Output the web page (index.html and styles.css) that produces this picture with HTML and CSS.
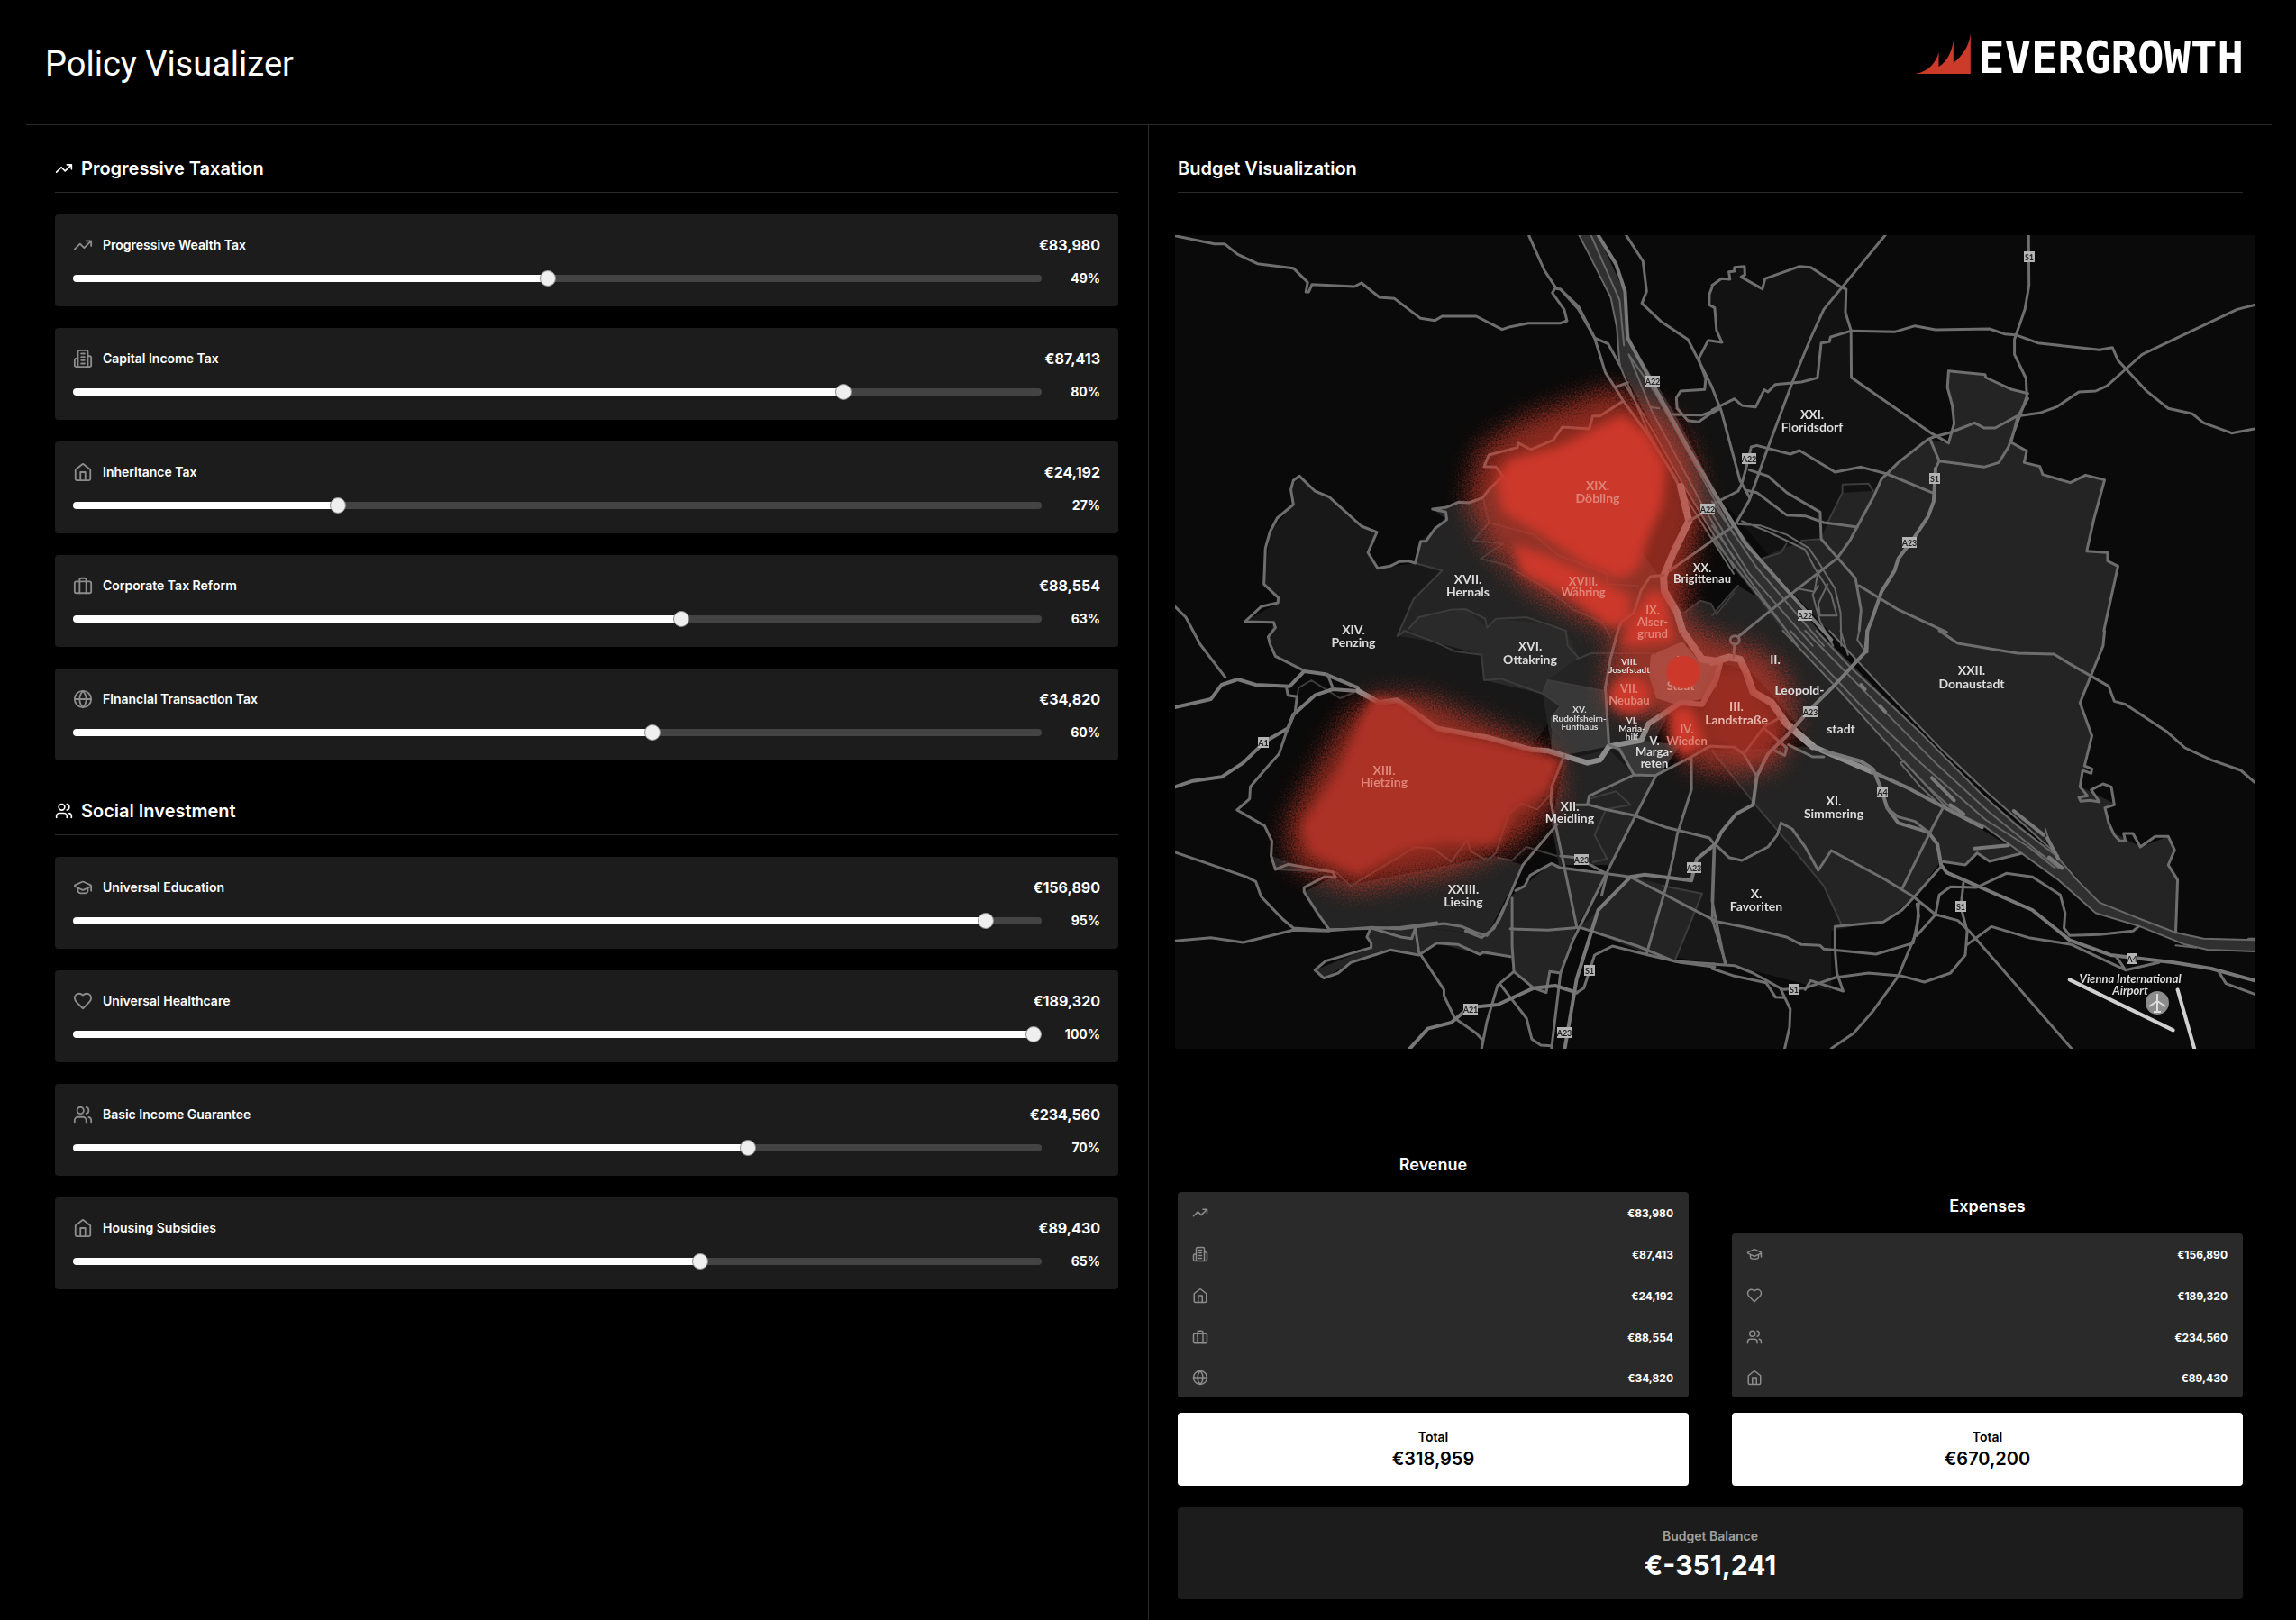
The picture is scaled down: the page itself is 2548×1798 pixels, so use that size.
FILE: index.html
```html
<!DOCTYPE html>
<html lang="en">
<head>
<meta charset="utf-8">
<meta name="viewport" content="width=device-width, initial-scale=1">
<title>Policy Visualizer</title>
<link rel="stylesheet" href="styles.css">
</head>
<body>
<svg class="sprite" aria-hidden="true">
  <symbol id="trend" viewBox="0 0 24 24"><path d="M22 7 13.5 15.5 8.5 10.5 2 17M16 7h6v6"/></symbol>
  <symbol id="building" viewBox="0 0 24 24"><path d="M6 22V4a2 2 0 0 1 2-2h8a2 2 0 0 1 2 2v18ZM6 12H4a2 2 0 0 0-2 2v6a2 2 0 0 0 2 2h2M18 9h2a2 2 0 0 1 2 2v9a2 2 0 0 1-2 2h-2M10 6h4M10 10h4M10 14h4M10 18h4"/></symbol>
  <symbol id="house" viewBox="0 0 24 24"><path d="m3 9 9-7 9 7v11a2 2 0 0 1-2 2H5a2 2 0 0 1-2-2zM9 22V12h6v10"/></symbol>
  <symbol id="case" viewBox="0 0 24 24"><rect x="2" y="7" width="20" height="14" rx="2"/><path d="M16 21V5a2 2 0 0 0-2-2h-4a2 2 0 0 0-2 2v16"/></symbol>
  <symbol id="globe" viewBox="0 0 24 24"><circle cx="12" cy="12" r="10"/><path d="M12 2a14.5 14.5 0 0 0 0 20 14.5 14.5 0 0 0 0-20M2 12h20"/></symbol>
  <symbol id="users" viewBox="0 0 24 24"><path d="M16 21v-2a4 4 0 0 0-4-4H6a4 4 0 0 0-4 4v2M22 21v-2a4 4 0 0 0-3-3.87M16 3.13a4 4 0 0 1 0 7.75"/><circle cx="9" cy="7" r="4"/></symbol>
  <symbol id="cap" viewBox="0 0 24 24"><path d="M21.42 10.922a1 1 0 0 0-.019-1.838L12.83 5.18a2 2 0 0 0-1.66 0L2.6 9.08a1 1 0 0 0 0 1.832l8.57 3.908a2 2 0 0 0 1.66 0zM22 10v6M6 12.5V16a6 3 0 0 0 12 0v-3.5"/></symbol>
  <symbol id="heart" viewBox="0 0 24 24"><path d="M19 14c1.49-1.46 3-3.21 3-5.5A5.5 5.5 0 0 0 16.5 3c-1.76 0-3 .5-4.5 2-1.5-1.5-2.74-2-4.5-2A5.5 5.5 0 0 0 2 8.5c0 2.3 1.5 4.05 3 5.5l7 7Z"/></symbol>
</svg>

<div class="page">
  <header class="header">
    <h1 class="title">Policy Visualizer</h1>
    <div class="logo">
      <svg class="logo-mark" viewBox="140 116 182 135" aria-hidden="true"><path d="M140 250C180 244 208 214 216 178V227C244 210 261 176 265 136V214C296 192 318 156 322 116V251H140Z"/></svg>
      <span class="logo-text">EVERGROWTH</span>
    </div>
  </header>

  <main class="columns">
    <div class="controls">
      <section class="group">
        <h2 class="heading"><svg class="icon icon-head"><use href="#trend"/></svg>Progressive Taxation</h2>
        <div class="cards">
          <div class="card"><div class="card-top"><svg class="icon"><use href="#trend"/></svg><label class="name" for="s1">Progressive Wealth Tax</label><span class="amount">€83,980</span></div><div class="card-bottom"><input class="slider" id="s1" type="range" value="49" style="--v:49"><output class="percent" for="s1">49%</output></div></div>
          <div class="card"><div class="card-top"><svg class="icon"><use href="#building"/></svg><label class="name" for="s2">Capital Income Tax</label><span class="amount">€87,413</span></div><div class="card-bottom"><input class="slider" id="s2" type="range" value="80" style="--v:80"><output class="percent" for="s2">80%</output></div></div>
          <div class="card"><div class="card-top"><svg class="icon"><use href="#house"/></svg><label class="name" for="s3">Inheritance Tax</label><span class="amount">€24,192</span></div><div class="card-bottom"><input class="slider" id="s3" type="range" value="27" style="--v:27"><output class="percent" for="s3">27%</output></div></div>
          <div class="card"><div class="card-top"><svg class="icon"><use href="#case"/></svg><label class="name" for="s4">Corporate Tax Reform</label><span class="amount">€88,554</span></div><div class="card-bottom"><input class="slider" id="s4" type="range" value="63" style="--v:63"><output class="percent" for="s4">63%</output></div></div>
          <div class="card"><div class="card-top"><svg class="icon"><use href="#globe"/></svg><label class="name" for="s5">Financial Transaction Tax</label><span class="amount">€34,820</span></div><div class="card-bottom"><input class="slider" id="s5" type="range" value="60" style="--v:60"><output class="percent" for="s5">60%</output></div></div>
        </div>
      </section>
      <section class="group">
        <h2 class="heading"><svg class="icon icon-head"><use href="#users"/></svg>Social Investment</h2>
        <div class="cards">
          <div class="card"><div class="card-top"><svg class="icon"><use href="#cap"/></svg><label class="name" for="s6">Universal Education</label><span class="amount">€156,890</span></div><div class="card-bottom"><input class="slider" id="s6" type="range" value="95" style="--v:95"><output class="percent" for="s6">95%</output></div></div>
          <div class="card"><div class="card-top"><svg class="icon"><use href="#heart"/></svg><label class="name" for="s7">Universal Healthcare</label><span class="amount">€189,320</span></div><div class="card-bottom"><input class="slider" id="s7" type="range" value="100" style="--v:100"><output class="percent" for="s7">100%</output></div></div>
          <div class="card"><div class="card-top"><svg class="icon"><use href="#users"/></svg><label class="name" for="s8">Basic Income Guarantee</label><span class="amount">€234,560</span></div><div class="card-bottom"><input class="slider" id="s8" type="range" value="70" style="--v:70"><output class="percent" for="s8">70%</output></div></div>
          <div class="card"><div class="card-top"><svg class="icon"><use href="#house"/></svg><label class="name" for="s9">Housing Subsidies</label><span class="amount">€89,430</span></div><div class="card-bottom"><input class="slider" id="s9" type="range" value="65" style="--v:65"><output class="percent" for="s9">65%</output></div></div>
        </div>
      </section>
    </div>

    <section class="budget">
      <h2 class="heading">Budget Visualization</h2>
      <svg class="map" viewBox="1304 261 1198 903" role="img" aria-label="Map of Vienna districts">
        <defs>
          <filter id="halo" x="-30%" y="-30%" width="160%" height="160%">
            <feGaussianBlur stdDeviation="13" result="b"/>
            <feTurbulence type="fractalNoise" baseFrequency="0.6" numOctaves="1" seed="4" result="n"/>
            <feDisplacementMap in="b" in2="n" scale="40" xChannelSelector="R" yChannelSelector="G"/>
          </filter>
          <filter id="core" x="-20%" y="-20%" width="140%" height="140%"><feGaussianBlur stdDeviation="6"/></filter>
        </defs>
        <rect class="land" x="1304" y="261" width="1198" height="903"/>

        <!-- north-east quarter: fills -->
        <g transform="translate(1900 250) scale(.41327 .33333)">
          <path class="f1" d="M-8 215 25 178 48 180 60 140 87 137 88 170 135 212 142 178 235 137 265 140 360 213 374 507 592 695 470 828 400 980 335 1110 230 1210 0 880-70 650-96 600-85 552-20 547-37 445-11 383 26 390 12 350Z"/>
          <path class="f3" d="M635 485 733 497 735 507 805 547 848 560 848 577 803 723 845 752 838 790 880 803 888 830 962 857 1003 832 1054 848 1025 980 1006 1085 1062 1090 1062 1118 1090 1135 1052 1340 1050 1400 988 1590 1020 1700 990 1870 1080 1925 1055 1940 1075 2020 1150 2070 1225 2035 1242 2080 1225 2130 1250 2180 1245 2352 1150 2310 1040 2255 900 2060 700 1850 350 1400 130 1110 200 1070 293 1045 312 985 350 890 433 885 470 828 580 712 635 725 650 660 632 540Z"/>
          <path class="f3" d="M-80 1290-33 1250-3 1260 12 1295 70 1200 150 1260 500 1750 280 1740 180 1590 100 1480-60 1440Z"/>
        </g>
        <!-- north-west quarter: fills -->
        <g transform="translate(1300 250) scale(.39796 .33333)">
          <path class="f2" d="M680 1125 575 1142 548 1090 573 1022 530 1002 440 905 400 885 357 835 333 880 340 930 275 1020 258 1195 298 1240 297 1257 205 1320 285 1322 270 1370 290 1435 365 1480 520 1540 740 1675 1000 1745 1060 1640 1035 1560 872 1515 865 1430 735 1388 630 1368 675 1245 755 1150Z"/>
          <path class="f3" d="M680 1125 695 1052 768 980 728 945 868 907 925 835 1260 1000 1430 1290 1440 1500 1300 1830 1160 1790 1060 1740 1035 1560 872 1515 865 1430 735 1388 630 1368 675 1245 755 1150Z"/>
          <path class="f4" d="M660 1345 690 1305 820 1278 880 1340 905 1310 1040 1325 1100 1350 1135 1440 1050 1515 1035 1560 872 1515 865 1430 735 1388Z"/>
          <path class="f5" d="M1050 1515 1205 1550 1220 1735 1160 1790 1060 1745 1060 1640 1085 1600 1035 1560Z"/>
          <path class="water" d="M1137 33H1190L1262 220 1280 385 1400 620 1510 870 1568 990V1150L1400 800 1250 465 1240 340 1225 240Z"/>
        </g>
        <!-- south-west quarter: fills -->
        <g transform="translate(1300 700) scale(.39796 .33333)">
          <path class="f3" d="M280 750 500 845 900 750 980 780 880 1015 690 985 440 995 370 870 458 815 290 795Z"/>
          <path class="f3" d="M690 985 880 1015 940 890 1060 775 1215 810 1130 985 1085 1140 1055 1135 1045 1205 1010 1190 955 1135 945 1085 860 1078 740 1040 690 1080 610 1063 500 1105 425 1157 400 1130 557 1055 545 1020 555 992Z"/>
          <path class="f2" d="M1095 415 1220 385 1350 485 1500 385 1700 500 1900 985 1840 1000V1200L1568 1115 1325 1075 1140 988 1250 720 1070 640Z"/>
          <path class="f3" d="M1095 430 1220 395 1290 480 1345 490 1225 780 1080 780 1060 640Z"/>
          <path class="f5" d="M1240 390 1310 365 1420 380 1370 465 1350 482 1290 480Z"/>
          <path class="f3" d="M1280 820 1480 875 1405 1095 1325 1075 1140 988 1190 930Z"/>
        </g>
        <!-- south-east quarter: fills -->
        <g transform="translate(1900 700) scale(.41327 .33333)">
          <path class="f3" d="M0 400 270 385 190 0 630 590 830 742 745 768 712 740 680 780 615 768 540 890 460 970 350 985 300 850Z"/>
          <path class="water" d="M0-480 70-340 180-160 300 20 560 340 720 540 925 750 1040 905 1245 1005 1320 1025 1457 1030V1068L1330 1062 1270 1045 1150 985 1030 940 930 830 830 740 730 650 630 590 350 210 190 0 90-160 0-300Z"/>
        </g>
        <path class="f6" d="M1832 727 1867 712 1885 733 1912 735 1905 762 1893 775 1860 782 1838 775 1830 750Z"/>

        <!-- north-west quarter: lines -->
        <g class="lines" transform="translate(1300 250) scale(.39796 .33333)">
          <path class="dark" d="M870 910 885 990 842 1050 925 1060 862 1110 930 1130 1060 1220 1120 1280 1200 1320 1225 1370M885 990 1010 1030 1080 1100 1215 1160 1215 1195 1300 1200M680 1125 755 1150 675 1245 630 1368M660 1345 690 1305 780 1280 820 1278 875 1310 880 1340 905 1310 990 1305 1040 1325 1100 1350M1430 1290 1475 1250 1505 1260 1520 1295 1568 1225"/>
          <path d="M10 35 120 62 148 62 185 97 240 128 340 143 380 190 375 222 383 222 392 197 510 204 530 192 580 240 622 244 695 310 735 317 755 303 850 303 922 347 945 338 995 326 1085 326 1103 318 1095 280 1062 225 1070 210 1085 213 1135 270 1180 375 1218 395 1250 465"/>
          <path d="M997 35 1040 150 1072 208M1085 213 1135 280 1180 375 1210 490 1237 540 1272 524M1237 540 1260 585 1330 700 1405 840 1440 950 1443 985"/>
          <path class="thin" d="M1137 33 1170 110 1225 240 1242 340 1250 465 1262 500 1330 690 1420 880 1568 1160M1275 430 1340 620 1480 930 1568 1110M1275 430 1350 560 1568 1030M1265 530 1350 700 1430 870 1568 1140M1170 33 1250 250 1262 400M1335 605 1360 610"/>
          <path class="road" d="M1190 33 1240 130 1265 220 1272 375 1320 480 1440 740 1568 1000"/>
          <path d="M1268 33 1315 120 1325 220 1312 260 1365 320 1440 380 1470 450 1508 540M1508 205 1500 230 1500 265 1515 275 1520 350 1535 390 1497 383 1470 445 1490 510 1487 547 1420 552 1408 575 1410 610 1440 650 1470 655 1500 630 1530 610M1400 630 1480 632 1530 610"/>
          <path d="M680 1125 660 1118 635 1120 610 1135 575 1142 548 1090 573 1022 530 1002 440 905 400 885 357 835 340 850 333 880 340 930 295 975 275 1020 262 1075 258 1195 298 1240 297 1257 250 1270 205 1320 285 1322 290 1340 270 1370 275 1395 290 1435 365 1480M680 1125 695 1052 710 1052 735 1010 768 980 765 955 728 945 765 940 800 922 830 924 868 907 885 880 925 835 905 805 872 803 885 765 965 740 967 725 1003 747 1065 715 1090 672 1165 678 1175 635 1195 635 1260 585M10 1270 40 1305 80 1395 150 1505"/>
          <path class="canal" d="M1420 870 1443 985 1400 1090 1372 1170 1375 1220 1410 1290 1425 1350 1480 1445 1510 1450"/>
          <path d="M1372 1165 1335 1170 1310 1215 1290 1290 1255 1320 1245 1350M1390 1150 1508 1050M1443 985 1508 940"/>
        </g>
        <!-- north-east quarter: lines -->
        <g class="lines" transform="translate(1900 250) scale(.41327 .33333)">
          <path class="dark" d="M312 985 350 890 350 863 420 860 433 885M135 1110 185 1090 200 1060M0 1300 40 1240 70 1200M240 1050 293 1045"/>
          <path d="M0 200 25 178 48 180 45 155 60 153 60 140 87 137 88 165 78 172 135 212 142 178 235 137 265 140 345 205 360 213 358 290 373 350 374 507 592 695 635 725 650 660 645 600 632 540 635 485 733 497 735 507 805 547 848 560M848 577 820 640 803 723 845 752 838 790 880 803 888 830 962 857 1003 832 1054 848 1025 980 1006 1085 1062 1090 1062 1118 1090 1135 1052 1350"/>
          <path d="M465 33 350 205 300 280 265 375 215 525 150 740 100 915 70 980 60 1000M1457 265 1410 280 1155 430 1110 480 1060 535 1030 552 985 555 925 605 880 625 820 635 760 675 730 675 705 658 640 690 595 705 580 712 500 790 455 845 435 900 400 980 370 1050 335 1110 230 1210 70 1370"/>
          <path d="M850 33 851 200 840 280 812 380 812 430 843 510 845 570 825 640 795 740 770 790 730 805 610 785 600 810"/>
          <path class="road" d="M600 810 595 920 580 970 540 1045 500 1110 490 1150 455 1220 430 1310 417 1350 415 1420"/>
          <path d="M1457 678 1395 692 1320 658 1290 628 1225 610 1165 550 1090 450 1075 407 1040 415 875 392 815 365 785 362 745 345 600 348 545 335 490 355 372 352 318 372 315 388 293 392 283 508 240 522 170 530 150 555 140 548 117 605 80 600 60 578 0 615"/>
          <path d="M0 540 25 620 75 850 100 905M80 860 90 815 105 738 120 733 210 762 235 750 330 822 400 805 470 828 590 890M100 815 150 835 200 890 290 955 293 1045 385 1175 400 1280 395 1350M90 882 120 890 200 965 250 968 300 990 390 1005M585 712 610 785M0 930 70 885 80 860M0 1050 60 1000M395 1200 500 1280 630 1355"/>
          <path class="thin" d="M70 995 130 1000 200 1030 260 1075 290 1130 330 1210 345 1290 347 1400M80 985 150 1020 250 1080 275 1140 320 1230 335 1300 290 1300 285 1260 310 1195M230 1210 275 1220 285 1150M285 1200 270 1230 290 1320 325 1400M0 920 120 1140 300 1400M0 960 100 1160 270 1400M0 1000 100 1180 230 1400M0 1040 90 1180 200 1350"/>
          <path class="road" d="M0 880 90 1060 320 1380"/>
        </g>
        <!-- south-west quarter: lines -->
        <g class="lines" transform="translate(1300 700) scale(.39796 .33333)">
          <path class="dark" d="M635 15 650 0 735 38 790 68 865 80 872 165 920 160 1035 210 1085 250 1060 290 1060 320 1095 360M1035 210 1050 165 1205 200M1130 95 1170 75 1350 75M1100 0 1105 50 1135 90M350 220 355 190 390 165 470 225 510 205M290 795 458 803 500 850 680 720 730 725 780 770 825 695 835 735 880 765 905 740 940 610 975 575 1020 595 1060 540M910 755 950 765 990 720 1075 750M1165 560 1240 535 1280 580 1210 595M1210 600 1180 680 1215 760 1175 770M1370 850 1480 875 1405 1095"/>
          <path class="road" d="M10 255 110 228 140 180 185 162 235 180 330 185 370 135 430 145 520 190"/>
          <path class="wien" d="M520 200 580 240 630 232 740 325 880 355 1000 395 1050 400 1160 440 1195 430 1220 385 1310 365 1330 310 1420 240 1480 245 1520 160 1530 110"/>
          <path class="road" d="M10 520 60 500 140 487 200 440 260 370 325 325 340 280 400 215 450 195 510 200"/>
          <path d="M435 145 450 190M320 185 325 215 350 220 345 270 320 340 300 410 270 450 220 520 218 560 183 597 260 650 280 700 278 750 290 795 325 778 450 803 458 822 425 820 370 855 370 870 410 945 440 995"/>
          <path d="M1245 0 1225 90 1210 190 1220 380 1250 395 1290 480 1350 482 1450 420 1500 385 1510 385M1290 480 1165 550 1160 580 1130 580M1165 580 1210 595 1290 615 1380 655 1500 690 1515 712"/>
          <path d="M1095 415 1060 520 1058 570 1070 640 1130 985M1350 485 1250 720 1120 1030 1085 1140 1060 1391M1450 420 1450 530 1410 680 1400 750 1380 850 1325 1075"/>
          <path d="M1075 645 980 780 940 890 915 960 880 1015 850 1005 810 985 760 975 690 985 640 993 560 988 440 998 340 990 310 960 250 885 235 835 210 820 10 738M930 915 900 990 865 1022 820 1000M10 1033 110 1022 200 1038 340 997 440 1000M440 995 640 988 740 972"/>
          <path d="M960 865 985 850 1000 815 1060 775 1085 790 1220 810 1280 820 1370 875 1450 925 1515 965M1085 750 1130 755 1215 810 1200 880M1515 712 1508 960 1545 1105M950 890 950 1050 955 1135 1010 1190 1045 1205 1055 1135 1085 1140M945 993 1050 997 1140 988 1300 1050 1400 1100 1515 1110"/>
          <path class="road" d="M1097 1391 1130 1160 1190 930 1280 820 1320 812 1450 832 1465 760 1515 712"/>
          <path d="M555 992 545 1020 557 1040 557 1055 430 1100 400 1130 425 1157 465 1140 500 1105 610 1063 690 1080 740 1040 800 1045 860 1078 870 1070 945 1085M558 990 640 1020 670 1025 680 990 690 1070 760 1195 760 1215 790 1290 850 1340 865 1360M955 1135 910 1180 880 1300 865 1391M915 1175 990 1290 1005 1360 1030 1380 1060 1382"/>
          <path class="road" d="M665 1391 715 1325 780 1305 830 1255 910 1245 1010 1190 1070 1182 1130 1205"/>
          <path d="M1130 1205 1150 1190 1180 1080 1230 1050 1330 1080 1420 1105 1515 1120"/>
        </g>
        <!-- south-east quarter: lines -->
        <g class="lines" transform="translate(1900 700) scale(.41327 .33333)">
          <path class="dark" d="M0 400 110 570 200 700 300 850 350 985"/>
          <path class="thin" d="M190 0 350 210 510 430 630 590 730 650 830 740 930 830 1030 940 1150 985 1270 1045 1330 1062 1457 1068M280 0 370 120 560 340 720 540 820 650 925 750 980 830 1040 905 1150 960 1245 1005 1320 1025 1457 1030M210 0 400 250 560 440 735 630 850 720 920 790M250 0 420 215 600 440 740 600 830 690 930 790M315 0 450 180 620 400 740 540 850 660 930 750M345 0 365 80M395 0 390 30 412 70"/>
          <path class="thin" d="M505 440 560 520 620 590M515 435 580 520 650 600M505 440 515 435M895 660 905 700M860 730 890 750M1245 1048 1300 1055M1440 1025 1457 1025"/>
          <path class="road" d="M590 490 650 565M640 580 675 610M810 600 890 680M900 690 930 760M705 725 795 715M400 180 410 195M450 250 465 270M905 755 940 790"/>
          <path class="canal" d="M0 105 45 88 75 95 92 140 110 205 160 240 200 310 270 385"/>
          <path class="wien" d="M270 385 430 470"/>
          <path class="road" d="M430 470 520 520 610 580 725 655"/>
          <path class="road" d="M417 0 412 70 330 180 265 260 200 350 150 410 120 485 110 580 65 610 25 670 5 720"/>
          <path d="M5 720 0 900 35 1110"/>
          <path class="road" d="M300 400 400 435 432 460 455 530 470 590 500 640 580 670 605 710 615 780 630 805 860 930 960 1030 1070 1080 1240 1105 1340 1125 1457 1165"/>
          <path d="M470 590 500 620 545 635 580 670M610 0 660 42 820 75 918 78 960 110 1065 185 1080 235 1110 245 1220 335 1270 390 1340 430 1420 465 1457 505"/>
          <path d="M1054 0 1050 50 988 240 1020 350 1000 450 1020 460 1018 475 995 465 988 520 1008 550 985 555 990 568 1015 565 1040 570 1018 530 1050 510 1072 520 1080 580 1055 590 1065 640 1080 680 1095 700 1110 700 1105 675 1130 675 1150 720 1190 685 1225 685 1242 730 1225 780 1250 830 1245 1005"/>
          <path d="M615 768 680 780 712 740 745 768 830 742M615 785 540 890 510 930 460 970 330 985 330 1060 335 1140 352 1200 265 1165 250 1195M0 965 100 990 200 1020 240 1045 290 1048 300 1060 440 1077 540 1040 555 950 550 910"/>
          <path d="M12 715 45 755 80 765 150 720 175 680 185 640 215 660 250 720 285 798 320 732 460 825 540 885 600 945 660 965 690 1000 965 1391M620 590 590 660 510 860"/>
          <path d="M675 840 668 920 685 1000 680 1080 640 1140 570 1170 510 1150 420 1140 330 1155 250 1190 190 1195 110 1140 60 1115 0 1110M185 1195 210 1260 208 1320 195 1391M555 905 550 1000 500 1150 430 1270 380 1340 320 1391M550 1015 600 945 610 880 640 853 710 855 790 808 860 820 935 880 948 940 945 990 960 1015 1040 1012 1130 1000 1145 985"/>
          <path d="M685 1045 750 985 850 1022 965 1045 1110 1130 1200 1105M1085 1085 1110 1130M1360 1135 1380 1175 1457 1210M0 1125 60 1150 145 1172 170 1220 195 1222"/>
          <path d="M0 385 60 388 85 410 120 485M85 410 140 320 180 290M140 325 200 390 195 415 170 400M205 380 270 420 300 420M60 45 58 88M70 20 90 0"/>
          <ellipse cx="61" cy="31" rx="12" ry="14"/>
          <path class="runway" d="M960 1162 1238 1330M1250 1195 1295 1391"/>
        </g>
        <circle class="plane-disc" cx="2394" cy="1113" r="13"/>
        <path class="plane" d="M2394 1103v19M2394 1111l-9 6M2394 1111l9 6M2390 1123h8"/>

        <!-- heat overlay -->
        <g class="halo" filter="url(#halo)">
          <path d="M1789 430 1850 460 1880 510 1890 570 1872 640 1868 712 1784 700 1706 660 1650 605 1628 555 1642 498 1690 466Z"/>
          <path d="M1795 695 1870 690 1912 712 1950 720 1982 750 1992 800 1972 850 1925 860 1875 850 1852 800 1785 785 1785 735Z"/>
          <path d="M1520 775 1575 772 1690 820 1728 842 1732 885 1685 935 1610 968 1503 988 1435 960 1428 915 1460 855 1496 795Z"/>
        </g>
        <g class="core" filter="url(#core)">
          <path d="M1802 460 1830 483 1849 517 1845 560 1829 597 1817 632 1797 643 1758 626 1714 596 1668 568 1660 533 1674 510 1730 495 1770 475Z"/>
          <path d="M1680 604 1722 618 1770 641 1809 661 1807 690 1786 696 1738 660 1688 636Z"/>
          <path d="M1831 655 1848 661 1858 712 1798 717 1813 683Z"/>
          <ellipse cx="1809" cy="772" rx="23" ry="20"/>
          <path d="M1855 785 1877 785 1893 823 1869 842 1853 820Z"/>
          <path class="deep" d="M1523 773 1559 779 1594 811 1698 833 1736 843 1716 879 1680 899 1660 937 1602 935 1555 944 1507 971 1455 946 1445 917 1487 855 1513 793Z"/>
          <path class="mild" d="M1905 745 1935 745 1950 775 1980 810 1950 845 1905 825 1890 790Z"/>
        </g>

        <g class="labels">
          <text x="1629" y="648">XVII.</text><text x="1629" y="662">Hernals</text>
          <text x="1502" y="704">XIV.</text><text x="1502" y="718">Penzing</text>
          <text x="1698" y="722">XVI.</text><text x="1698" y="737">Ottakring</text>
          <text x="1624" y="992">XXIII.</text><text x="1624" y="1006">Liesing</text>
          <text x="2011" y="465">XXI.</text><text x="2011" y="479">Floridsdorf</text>
          <text x="2188" y="749">XXII.</text><text x="2188" y="764">Donaustadt</text>
          <text x="2035" y="894">XI.</text><text x="2035" y="908">Simmering</text>
          <text x="1949" y="997">X.</text><text x="1949" y="1011">Favoriten</text>
          <text x="1742" y="900">XII.</text><text x="1742" y="913">Meidling</text>
          <text x="1970" y="737">II.</text><text x="1997" y="771">Leopold-</text><text x="2043" y="814">stadt</text>
          <g class="mid">
            <text x="1889" y="635">XX.</text><text x="1889" y="647">Brigittenau</text>
            <text x="1836" y="827">V.</text><text x="1836" y="839">Marga-</text><text x="1836" y="852">reten</text>
            <text class="italic" x="2364" y="1091">Vienna International</text><text class="italic" x="2364" y="1104">Airport</text>
          </g>
          <g class="small">
            <text x="1753" y="791">XV.</text><text x="1753" y="801">Rudolfsheim-</text><text x="1753" y="810">Fünfhaus</text>
            <text x="1811" y="803">VI.</text><text x="1811" y="812">Maria-</text><text x="1811" y="821">hilf</text>
            <text x="1808" y="738">VIII.</text><text x="1808" y="747">Josefstadt</text>
          </g>
          <g class="pink">
            <text x="1773" y="544">XIX.</text><text x="1773" y="558">Döbling</text>
            <text x="1536" y="860">XIII.</text><text x="1536" y="873">Hietzing</text>
            <text class="bright" x="1927" y="789">III.</text><text class="bright" x="1927" y="804">Landstraße</text>
            <g class="mid">
              <text x="1757" y="650">XVIII.</text><text x="1757" y="662">Währing</text>
              <text x="1834" y="682">IX.</text><text x="1834" y="695">Alser-</text><text x="1834" y="708">grund</text>
              <text x="1808" y="769">VII.</text><text x="1808" y="782">Neubau</text>
              <text x="1872" y="814">IV.</text><text x="1872" y="827">Wieden</text>
              <text x="1864" y="738">I.</text><text x="1865" y="766">Stadt</text>
            </g>
          </g>
        </g>
        <ellipse class="spot" cx="1868" cy="746" rx="19" ry="18"/>

        <g class="shields">
          <rect x="1826" y="417" width="16" height="12"/><text x="1834" y="427">A22</text>
          <rect x="1887" y="559" width="16" height="12"/><text x="1895" y="569">A22</text>
          <rect x="2246" y="279" width="12" height="12"/><text x="2252" y="289">S1</text>
          <rect x="1933" y="503" width="16" height="12"/><text x="1941" y="513">A22</text>
          <rect x="2141" y="525" width="12" height="12"/><text x="2147" y="535">S1</text>
          <rect x="2111" y="596" width="16" height="12"/><text x="2119" y="606">A23</text>
          <rect x="1995" y="677" width="16" height="12"/><text x="2003" y="687">A22</text>
          <rect x="1396" y="818" width="12" height="12"/><text x="1402" y="828">A1</text>
          <rect x="1747" y="948" width="16" height="12"/><text x="1755" y="958">A23</text>
          <rect x="1872" y="957" width="16" height="12"/><text x="1880" y="967">A23</text>
          <rect x="1758" y="1071" width="12" height="12"/><text x="1764" y="1081">S1</text>
          <rect x="1624" y="1114" width="16" height="12"/><text x="1632" y="1124">A21</text>
          <rect x="1728" y="1140" width="16" height="12"/><text x="1736" y="1150">A23</text>
          <rect x="2001" y="784" width="16" height="12"/><text x="2009" y="794">A23</text>
          <rect x="2083" y="873" width="12" height="12"/><text x="2089" y="883">A4</text>
          <rect x="2170" y="1000" width="12" height="12"/><text x="2176" y="1010">S1</text>
          <rect x="2360" y="1058" width="12" height="12"/><text x="2366" y="1068">A4</text>
          <rect x="1985" y="1092" width="12" height="12"/><text x="1991" y="1102">S1</text>
        </g>
      </svg>

      <div class="summary">
        <div class="ledgers">
          <section class="ledger">
            <h3 class="ledger-title">Revenue</h3>
            <table class="lines-table" aria-label="Revenue">
              <tbody>
                <tr><td><svg class="icon icon-small"><use href="#trend"/></svg></td><td class="num">€83,980</td></tr>
                <tr><td><svg class="icon icon-small"><use href="#building"/></svg></td><td class="num">€87,413</td></tr>
                <tr><td><svg class="icon icon-small"><use href="#house"/></svg></td><td class="num">€24,192</td></tr>
                <tr><td><svg class="icon icon-small"><use href="#case"/></svg></td><td class="num">€88,554</td></tr>
                <tr><td><svg class="icon icon-small"><use href="#globe"/></svg></td><td class="num">€34,820</td></tr>
              </tbody>
            </table>
            <div class="total"><span class="total-label">Total</span><strong class="total-value">€318,959</strong></div>
          </section>
          <section class="ledger">
            <h3 class="ledger-title">Expenses</h3>
            <table class="lines-table" aria-label="Expenses">
              <tbody>
                <tr><td><svg class="icon icon-small"><use href="#cap"/></svg></td><td class="num">€156,890</td></tr>
                <tr><td><svg class="icon icon-small"><use href="#heart"/></svg></td><td class="num">€189,320</td></tr>
                <tr><td><svg class="icon icon-small"><use href="#users"/></svg></td><td class="num">€234,560</td></tr>
                <tr><td><svg class="icon icon-small"><use href="#house"/></svg></td><td class="num">€89,430</td></tr>
              </tbody>
            </table>
            <div class="total"><span class="total-label">Total</span><strong class="total-value">€670,200</strong></div>
          </section>
        </div>
        <div class="balance"><span class="balance-label">Budget Balance</span><strong class="balance-value">€-351,241</strong></div>
      </div>
    </section>
  </main>
</div>
</body>
</html>
```
FILE: styles.css
```css
* { box-sizing: border-box; }
body {
  margin: 0;
  background: #000;
  color: #fff;
  font-family: Inter, "Liberation Sans", sans-serif;
}
h1, h2, h3 { margin: 0; }
.sprite { display: none; }
.page {
  display: flex;
  flex-direction: column;
  min-height: 100vh;
  padding: 0 27px 0 29px;
}

/* header */
.header {
  display: flex;
  justify-content: space-between;
  align-items: flex-start;
  height: 139px;
  padding: 32px 31px 0 21px;
  border-bottom: 1px solid #2a2a2a;
}
.title {
  font: 400 38px/78px Roboto, sans-serif;
}
.logo { display: flex; align-items: flex-end; gap: 8px; margin-top: 5px; }
.logo-mark { width: 61px; height: 45px; fill: #cc3a2a; }
.logo-text {
  font: 700 49px/52px "DejaVu Sans Mono", monospace;
  margin-bottom: -9px;
}

/* layout */
.columns { flex: 1; display: grid; grid-template-columns: 1fr 1fr; }
.controls {
  display: flex;
  flex-direction: column;
  gap: 42px;
  padding: 34px 33px 24px 32px;
  border-right: 1px solid #2a2a2a;
}
.budget { display: flex; flex-direction: column; padding: 34px 32px 23px; }
.heading {
  display: flex;
  align-items: center;
  gap: 9px;
  padding-bottom: 12px;
  border-bottom: 1px solid #2a2a2a;
  font-size: 20px;
  line-height: 28px;
  font-weight: 600;
}
.icon {
  flex: none;
  display: block;
  width: 22px;
  height: 22px;
  fill: none;
  stroke: #8c8c8c;
  stroke-width: 2;
  stroke-linecap: round;
  stroke-linejoin: round;
}
.icon-head { width: 20px; height: 20px; stroke: #fff; }
.icon-small { width: 18px; height: 18px; }

/* policy cards */
.cards { display: flex; flex-direction: column; gap: 24px; margin-top: 24px; }
.card {
  display: flex;
  flex-direction: column;
  gap: 12px;
  padding: 20px;
  border-radius: 4px;
  background: #1c1c1c;
}
.card-top { display: flex; align-items: center; gap: 11px; line-height: 28px; }
.name { flex: 1; font-size: 14px; font-weight: 600; }
.amount { font-size: 16px; font-weight: 700; }
.card-bottom {
  display: grid;
  grid-template-columns: 1fr 49px;
  align-items: center;
  gap: 16px;
  line-height: 22px;
}
.percent { font-size: 14px; font-weight: 700; text-align: right; }
.slider {
  --x: calc(9px + (100% - 18px) * var(--v) / 100);
  appearance: none;
  width: 100%;
  height: 8px;
  margin: 0;
  border-radius: 4px;
  background: linear-gradient(to right, #fff var(--x), #444 var(--x));
}
.slider::-webkit-slider-thumb {
  appearance: none;
  width: 18px;
  height: 18px;
  border: 1px solid #8f8f8f;
  border-radius: 50%;
  background: #efefef;
}

/* summary */
.summary { margin-top: auto; display: flex; flex-direction: column; gap: 24px; }
.ledgers { display: grid; grid-template-columns: 1fr 1fr; gap: 48px; align-items: end; }
.ledger-title {
  margin-bottom: 18px;
  font-size: 18px;
  line-height: 24px;
  font-weight: 600;
  text-align: center;
}
.lines-table {
  width: 100%;
  border-spacing: 0;
  border-radius: 4px;
  background: #2a2a2a;
}
.lines-table td { height: 46px; padding: 0 17px 0 16px; }
.lines-table tr:last-child td { height: 44px; }
.num { font-size: 12px; font-weight: 700; text-align: right; }
.total, .balance {
  display: flex;
  flex-direction: column;
  align-items: center;
  border-radius: 4px;
}
.total { margin-top: 17px; padding: 16px; background: #fff; color: #000; }
.total-label { font-size: 14px; line-height: 22px; font-weight: 600; }
.total-value { font-size: 20px; line-height: 27px; font-weight: 600; }
.balance { padding: 21px 20px 17px; background: #1c1c1c; }
.balance-label { color: #a0a0a0; font-size: 14px; line-height: 22px; font-weight: 600; }
.balance-value { font-size: 30px; line-height: 42px; font-weight: 700; }

/* map */
.map {
  display: block;
  width: calc(100% + 16px);
  aspect-ratio: 1198 / 903;
  margin: 47px -13px 24px -3px;
}
.land { fill: #0a0a0a; }
.f1 { fill: #121212; }
.f2 { fill: #181818; }
.f3 { fill: #242424; }
.f4 { fill: #2a2a2a; }
.f5 { fill: #383838; }
.f6 { fill: #6c6c6c; }
.water { fill: #303030; }
.lines path, .lines ellipse {
  fill: none;
  stroke: #6e6e6e;
  stroke-width: 3;
  stroke-linejoin: round;
  stroke-linecap: round;
  vector-effect: non-scaling-stroke;
}
.lines .dark { stroke: #3c3c3c; stroke-width: 2; }
.lines .thin { stroke: #686868; stroke-width: 2; }
.lines .road { stroke: #787878; stroke-width: 4; }
.lines .wien { stroke: #8c8c8c; stroke-width: 6; }
.lines .canal { stroke: #969696; stroke-width: 8; }
.lines .runway { stroke: #d0d0d0; stroke-width: 4; }
.plane-disc { fill: #8c8c8c; }
.plane { fill: none; stroke: #ddd; stroke-width: 2; }
.halo { fill: #cc3a2a; opacity: .66; }
.core, .spot { fill: #cc3829; }
.core .deep { fill: #ad3127; }
.core .mild { fill: #ad3127; opacity: .4; }
.labels text {
  font-family: Lato, "Open Sans", sans-serif;
  font-size: 14px;
  font-weight: 700;
  text-anchor: middle;
  fill: #dcdcdc;
}
.labels .mid text { font-size: 13px; }
.labels .small text { font-size: 10px; }
.labels .italic { font-style: italic; }
.labels .pink text { fill: #de8478; font-weight: 700; }
.labels .pink .bright { fill: #e8b8b0; }
.shields rect { fill: #b4b4b4; }
.shields text {
  font-family: Lato, sans-serif;
  font-size: 9px;
  font-weight: 700;
  text-anchor: middle;
  fill: #222;
}
```
